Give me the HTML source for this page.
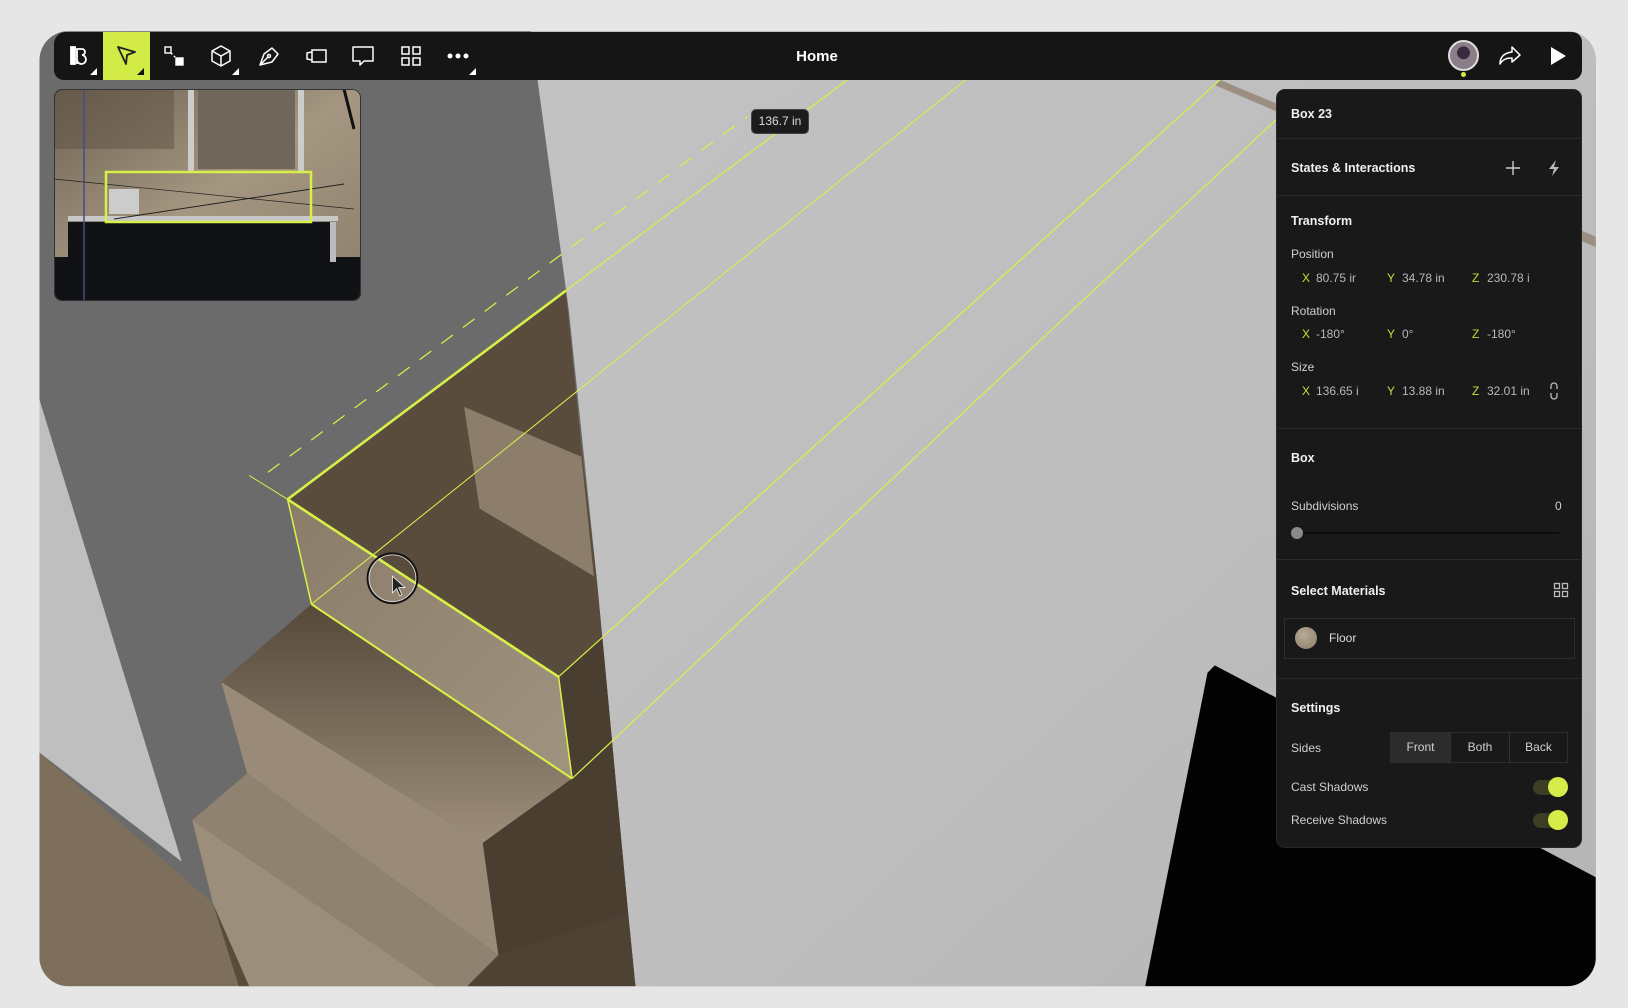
<!DOCTYPE html>
<html><head><meta charset="utf-8"><style>
*{margin:0;padding:0;box-sizing:border-box}
body{width:1628px;height:1008px;background:#e6e6e6;font-family:"Liberation Sans",sans-serif;position:relative;overflow:hidden}
.abs{position:absolute}
#scene{position:absolute;left:0;top:0;width:1628px;height:1008px}
.tb{left:54px;top:32px;width:1528px;height:48px;background:#151515;border-radius:12px 10px 10px 10px}
.ic{position:absolute;top:32px;width:47px;height:48px;display:flex;align-items:center;justify-content:center}
.tri{position:absolute;width:0;height:0;border-left:7px solid transparent;border-bottom:7px solid #fff}
.panel{left:1276px;top:89px;width:306px;height:759px;background:#191919;border-radius:9px;border:1px solid #262626}
.t{position:absolute;color:#f0f0f0;font-size:12.5px;font-weight:bold;white-space:nowrap}
.l{position:absolute;color:#d0d0d0;font-size:12px;white-space:nowrap}
.v{position:absolute;color:#b8b8b8;font-size:12px;white-space:nowrap}
.a{position:absolute;color:#c9dd3a;font-size:12px}
.hr{position:absolute;left:0;width:304px;height:1px;background:#2a2a2a}
.tg{position:absolute;width:34px;height:15px;border-radius:8px;background:#3b3e22}
.tg i{position:absolute;right:-1px;top:-3px;width:20px;height:20px;border-radius:50%;background:#d6ec48}
</style></head><body>
<svg id="scene" viewBox="0 0 1568 971" preserveAspectRatio="none">
<defs>
<clipPath id="fr"><rect x="38" y="30" width="1499" height="920" rx="28"/></clipPath>
<linearGradient id="wall" x1="0" y1="0" x2="1" y2="1"><stop offset="0" stop-color="#c2c2c2"/><stop offset="0.6" stop-color="#bdbdbd"/><stop offset="1" stop-color="#b4b4b4"/></linearGradient>
<linearGradient id="tan" x1="0" y1="0" x2="1" y2="1"><stop offset="0" stop-color="#8a7c68"/><stop offset="1" stop-color="#a09380"/></linearGradient>
<linearGradient id="tan2" x1="0" y1="0" x2="0" y2="1"><stop offset="0" stop-color="#57493a"/><stop offset="1" stop-color="#9c8e7a"/></linearGradient>
</defs>
<g clip-path="url(#fr)">
<rect x="38" y="30" width="1499" height="920" fill="#6b6b6b"/>
<polygon points="510,20 1537,20 1537,950 612,950 605,880 590,720 575,560 548,300" fill="url(#wall)"/>
<polygon points="1175,77 1537,228 1537,238 1170,82" fill="#9a8f80"/>
<polygon points="38,385 175,830 38,725" fill="#bfbfbf"/>
<polygon points="38,725 205,870 240,950 38,950" fill="#7d6f5c"/>
<polygon points="277,481 545,280 560,430 575,560 590,720 605,880 612,950 230,950 205,870 185,790 238,745 213,657 300,582" fill="#5a4c3c"/>
<polygon points="447,392 560,440 572,555 462,490" fill="#8c7e6b"/>
<polygon points="277,481 300,582 551,750 538,652" fill="url(#tan)"/>
<polygon points="300,582 213,657 465,812 551,750" fill="url(#tan2)"/>
<polygon points="213,657 238,745 480,920 465,812" fill="#998b77"/>
<polygon points="238,745 185,790 420,950 480,950 480,920" fill="#8f8270"/>
<polygon points="185,790 205,870 240,950 420,950" fill="#9b8e7b"/>
<polygon points="538,652 580,612 590,720 551,750" fill="#4a3e31"/>
<polygon points="551,750 590,720 605,880 480,920 465,812" fill="#4a3e31"/>
<polygon points="480,920 605,880 612,950 450,950" fill="#4e4234"/>
<polygon points="1163,648 1170,641 1250,683 1480,815 1537,845 1537,950 1103,950" fill="#030303"/>
<g stroke="#d8ef48" fill="none">
<line x1="277" y1="481" x2="545" y2="280" stroke-width="2.5"/>
<line x1="545" y1="280" x2="816" y2="77" stroke-width="1.2"/>
<line x1="240" y1="458" x2="277" y2="481" stroke-width="1"/>
<line x1="258" y1="455" x2="720" y2="112" stroke-width="1.2" stroke-dasharray="14,12"/>
<line x1="277" y1="481" x2="300" y2="582" stroke-width="1.5"/>
<line x1="300" y1="582" x2="551" y2="750" stroke-width="2"/>
<line x1="277" y1="481" x2="538" y2="652" stroke-width="2.5"/>
<line x1="538" y1="652" x2="551" y2="750" stroke-width="1.5"/>
<line x1="300" y1="582" x2="930" y2="77" stroke-width="1"/>
<line x1="538" y1="652" x2="1175" y2="77" stroke-width="1.2"/>
<line x1="551" y1="750" x2="1240" y2="105" stroke-width="1.2"/>
</g>
<circle cx="378" cy="557" r="24" fill="none" stroke="#111" stroke-width="1.8"/>
<circle cx="378" cy="557" r="22.5" fill="none" stroke="#ddd" stroke-width="0.8"/>
<path d="M378,555 L378,571 L382,567 L385,574 L387,573 L384,566 L390,566 Z" fill="#222" stroke="#eee" stroke-width="0.8"/>
</g>
</svg>

<div class="abs" style="left:751px;top:109px;width:58px;height:25px;background:#1c1c1c;border-radius:5px;border:1px solid #444;color:#ddd;font-size:12px;text-align:center;line-height:23px">136.7 in</div>

<svg class="abs" style="left:54px;top:89px" width="307" height="212" viewBox="0 0 307 212">
<defs><clipPath id="mm"><rect width="307" height="212" rx="8"/></clipPath>
<linearGradient id="mt" x1="0" y1="0" x2="1" y2="1"><stop offset="0" stop-color="#6e6253"/><stop offset=".5" stop-color="#a49680"/><stop offset="1" stop-color="#8c7f6c"/></linearGradient></defs>
<g clip-path="url(#mm)">
<rect width="307" height="212" fill="url(#mt)"/>
<rect x="0" y="0" width="120" height="60" fill="#5d5243" opacity=".5"/>
<rect x="144" y="0" width="97" height="80" fill="#6f675c"/>
<rect x="134" y="0" width="6" height="82" fill="#ccc"/>
<rect x="244" y="0" width="6" height="82" fill="#ccc"/>
<rect x="14" y="133" width="263" height="80" fill="#111215"/>
<rect x="0" y="168" width="307" height="44" fill="#111215"/>
<rect x="276" y="133" width="6" height="40" fill="#bbb"/>
<rect x="14" y="127" width="270" height="5" fill="#c8c8c8"/>
<rect x="55" y="100" width="30" height="25" fill="#ccc"/>
<line x1="30" y1="0" x2="30" y2="212" stroke="#4a4a80" stroke-width="1.5"/>
<line x1="0" y1="90" x2="300" y2="120" stroke="#222" stroke-width=".7"/>
<line x1="60" y1="130" x2="290" y2="95" stroke="#222" stroke-width="1"/>
<rect x="52" y="83" width="205" height="50" fill="none" stroke="#d8ef48" stroke-width="2.5"/>
<line x1="290" y1="0" x2="300" y2="40" stroke="#111" stroke-width="3"/>
</g>
<rect x=".5" y=".5" width="306" height="211" rx="8" fill="none" stroke="#333"/>
</svg>

<div class="abs tb"></div>
<div class="abs" style="left:103px;top:32px;width:47px;height:48px;background:#d3eb47"></div>
<div class="ic" style="left:56px"><svg width="26" height="26" viewBox="0 0 26 26" fill="none" stroke="#fff" stroke-width="1.8"><path d="M4 4v17h4V4z" fill="#fff"/><path d="M10 21V6h5a3 3 0 0 1 0 6a4.5 4.5 0 1 1-5 4"/></svg></div>
<div class="tri" style="left:90px;top:68px"></div>
<div class="ic" style="left:103px"><svg width="26" height="26" viewBox="0 0 26 26" fill="none" stroke="#222" stroke-width="1.8" stroke-linejoin="round"><path d="M4 4l17 5-8 3-1 9z"/></svg></div>
<div class="tri" style="left:137px;top:68px;border-bottom-color:#111"></div>
<div class="ic" style="left:150px"><svg width="26" height="26" viewBox="0 0 26 26" fill="none" stroke="#fff" stroke-width="1.4"><rect x="4" y="4" width="6" height="6"/><path d="M10 10l5 5" stroke-dasharray="2 2"/><rect x="15" y="15" width="7" height="7" fill="#fff"/></svg></div>
<div class="ic" style="left:197px"><svg width="26" height="26" viewBox="0 0 26 26" fill="none" stroke="#fff" stroke-width="1.5" stroke-linejoin="round"><path d="M13 3l9 5v10l-9 5-9-5V8z M4 8l9 5 9-5 M13 13v10"/></svg></div>
<div class="tri" style="left:232px;top:68px"></div>
<div class="ic" style="left:245px"><svg width="26" height="26" viewBox="0 0 26 26" fill="none" stroke="#fff" stroke-width="1.5" stroke-linejoin="round"><path d="M4 22l4-11 8-6 6 6-6 8z M4 22l8-8"/><circle cx="13" cy="13" r="1.5"/></svg></div>
<div class="ic" style="left:292px"><svg width="26" height="26" viewBox="0 0 26 26" fill="none" stroke="#fff" stroke-width="1.5"><rect x="9" y="7" width="14" height="12"/><path d="M9 9l-5 1v6l5 1"/></svg></div>
<div class="ic" style="left:339px"><svg width="26" height="26" viewBox="0 0 26 26" fill="none" stroke="#fff" stroke-width="1.5" stroke-linejoin="round"><path d="M3 4h20v14h-9l-4 4v-4H3z"/></svg></div>
<div class="ic" style="left:387px"><svg width="24" height="24" viewBox="0 0 24 24" fill="none" stroke="#fff" stroke-width="1.5"><rect x="3" y="3" width="7" height="7"/><rect x="14" y="3" width="7" height="7"/><rect x="3" y="14" width="7" height="7"/><rect x="14" y="14" width="7" height="7"/></svg></div>
<div class="ic" style="left:434px"><svg width="26" height="26" viewBox="0 0 26 26" fill="#fff"><circle cx="5" cy="13" r="2.5"/><circle cx="13" cy="13" r="2.5"/><circle cx="21" cy="13" r="2.5"/></svg></div>
<div class="tri" style="left:469px;top:68px"></div>
<div class="abs" style="left:717px;top:48px;width:200px;text-align:center;color:#fff;font-size:15px;font-weight:bold">Home</div>
<div class="abs" style="left:1448px;top:40px;width:31px;height:31px;border-radius:50%;background:radial-gradient(circle at 50% 40%,#3a2a40 0 30%,#8a7f88 31% 100%);border:2px solid #ddd"></div>
<div class="abs" style="left:1461px;top:72px;width:5px;height:5px;border-radius:50%;background:#d6ec48"></div>
<svg class="abs" style="left:1497px;top:43px" width="26" height="26" viewBox="0 0 26 26" fill="none" stroke="#fff" stroke-width="1.5" stroke-linejoin="round"><path d="M15 4l8 8-8 7v-4c-5 0-9 1-12 6 0-7 4-11 12-12z"/></svg>
<svg class="abs" style="left:1548px;top:45px" width="20" height="22" viewBox="0 0 20 22"><path d="M3 2l15 9-15 9z" fill="#fff"/></svg>

<div class="abs panel">
<div class="t" style="left:14px;top:17px">Box 23</div>
<div class="hr" style="top:48px"></div>
<div class="t" style="left:14px;top:71px">States &amp; Interactions</div>
<svg class="abs" style="left:228px;top:70px" width="16" height="16" viewBox="0 0 16 16" stroke="#ccc" stroke-width="1.4"><path d="M8 1v14M1 8h14"/></svg>
<svg class="abs" style="left:270px;top:69px" width="14" height="18" viewBox="0 0 14 18" fill="#bbb"><path d="M9 1L2 10h5l-2 7 7-9H7z"/></svg>
<div class="hr" style="top:105px"></div>
<div class="t" style="left:14px;top:124px">Transform</div>
<div class="l" style="left:14px;top:157px">Position</div>
<div class="a" style="left:25px;top:181px">X</div><div class="v" style="left:39px;top:181px">80.75 ir</div>
<div class="a" style="left:110px;top:181px">Y</div><div class="v" style="left:125px;top:181px">34.78 in</div>
<div class="a" style="left:195px;top:181px">Z</div><div class="v" style="left:210px;top:181px">230.78 i</div>
<div class="l" style="left:14px;top:214px">Rotation</div>
<div class="a" style="left:25px;top:237px">X</div><div class="v" style="left:39px;top:237px">-180°</div>
<div class="a" style="left:110px;top:237px">Y</div><div class="v" style="left:125px;top:237px">0°</div>
<div class="a" style="left:195px;top:237px">Z</div><div class="v" style="left:210px;top:237px">-180°</div>
<div class="l" style="left:14px;top:270px">Size</div>
<div class="a" style="left:25px;top:294px">X</div><div class="v" style="left:39px;top:294px">136.65 i</div>
<div class="a" style="left:110px;top:294px">Y</div><div class="v" style="left:125px;top:294px">13.88 in</div>
<div class="a" style="left:195px;top:294px">Z</div><div class="v" style="left:210px;top:294px">32.01 in</div>
<svg class="abs" style="left:272px;top:292px" width="10" height="18" viewBox="0 0 10 18" fill="none" stroke="#bbb" stroke-width="1.3"><path d="M2 7V4a3 3 0 0 1 6 0v3M2 11v3a3 3 0 0 0 6 0v-3"/></svg>
<div class="hr" style="top:338px"></div>
<div class="t" style="left:14px;top:361px">Box</div>
<div class="l" style="left:14px;top:409px">Subdivisions</div>
<div class="l" style="left:278px;top:409px">0</div>
<div class="abs" style="left:20px;top:442px;width:262px;height:2px;background:#0c0c0c"></div>
<div class="abs" style="left:14px;top:437px;width:12px;height:12px;border-radius:50%;background:#8a8a8a"></div>
<div class="hr" style="top:469px"></div>
<div class="t" style="left:14px;top:494px">Select Materials</div>
<svg class="abs" style="left:276px;top:492px" width="16" height="16" viewBox="0 0 16 16" fill="none" stroke="#bbb" stroke-width="1.3"><rect x="1.5" y="1.5" width="5" height="5"/><rect x="9.5" y="1.5" width="5" height="5"/><rect x="1.5" y="9.5" width="5" height="5"/><rect x="9.5" y="9.5" width="5" height="5"/></svg>
<div class="abs" style="left:7px;top:528px;width:291px;height:41px;border:1px solid #2e2e2e"></div>
<div class="abs" style="left:18px;top:537px;width:22px;height:22px;border-radius:50%;background:radial-gradient(circle at 40% 35%,#b8aa94,#8a7c68)"></div>
<div class="l" style="left:52px;top:541px;color:#ddd">Floor</div>
<div class="hr" style="top:588px"></div>
<div class="t" style="left:14px;top:611px">Settings</div>
<div class="l" style="left:14px;top:651px">Sides</div>
<div class="abs" style="left:113px;top:642px;width:178px;height:31px;border:1px solid #2e2e2e;display:flex;font-size:12px;color:#d0d0d0">
<div style="width:60px;background:#2c2c2c;text-align:center;line-height:29px;border-right:1px solid #333">Front</div>
<div style="width:59px;text-align:center;line-height:29px;border-right:1px solid #333">Both</div>
<div style="flex:1;text-align:center;line-height:29px">Back</div></div>
<div class="l" style="left:14px;top:690px">Cast Shadows</div>
<div class="tg" style="left:256px;top:690px"><i></i></div>
<div class="l" style="left:14px;top:723px">Receive Shadows</div>
<div class="tg" style="left:256px;top:723px"><i></i></div>
</div>
</body></html>
